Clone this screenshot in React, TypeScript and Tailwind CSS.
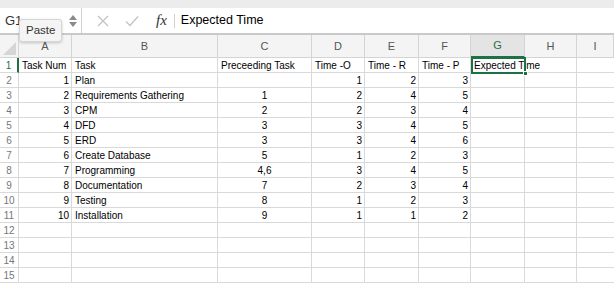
import React from 'react';

const COLS = ['A', 'B', 'C', 'D', 'E', 'F', 'G', 'H', 'I'];

type Row = [number | string, string, string, number | string, number | string, number | string];

const DATA: Row[] = [
  [1, 'Plan', '', 1, 2, 3],
  [2, 'Requirements Gathering', '1', 2, 4, 5],
  [3, 'CPM', '2', 2, 3, 4],
  [4, 'DFD', '3', 3, 4, 5],
  [5, 'ERD', '3', 3, 4, 6],
  [6, 'Create Database', '5', 1, 2, 3],
  [7, 'Programming', '4,6', 3, 4, 5],
  [8, 'Documentation', '7', 2, 3, 4],
  [9, 'Testing', '8', 1, 2, 3],
  [10, 'Installation', '9', 1, 1, 2],
];

const grid = 'grid grid-cols-[19px_53px_146px_94px_53px_54px_52px_54px_52px_37px]';

const FormulaBar = () => (
  <div className="relative flex h-[27px] items-center border-b-2 border-[#c9c9c9] bg-white">
    <div className="flex h-full w-[82px] items-center border-r border-[#d0d0d0] pl-[5px]">
      <span className="text-[13px] text-[#333]">G1</span>
      <div className="ml-auto mr-[4px] flex flex-col items-center gap-[2px]">
        <svg width="8" height="5" viewBox="0 0 8 5"><path d="M4 0L8 5H0z" fill="#8a8a8a" /></svg>
        <svg width="8" height="5" viewBox="0 0 8 5"><path d="M0 0H8L4 5z" fill="#8a8a8a" /></svg>
      </div>
    </div>
    <svg className="ml-[15px]" width="12" height="12" viewBox="0 0 12 12">
      <path d="M1 1L11 11M11 1L1 11" stroke="#c4c4c4" strokeWidth="1.4" />
    </svg>
    <svg className="ml-[16px]" width="14" height="12" viewBox="0 0 14 12">
      <path d="M1 6.5L5 10.5L13 1.5" stroke="#c4c4c4" strokeWidth="1.4" fill="none" />
    </svg>
    <span className="ml-[17px] text-[15px] italic text-[#333]" style={{ fontFamily: '"Liberation Serif", serif' }}>
      fx
    </span>
    <div className="ml-[7px] h-[14px] w-px bg-[#d0d0d0]" />
    <span className="ml-[6px] text-[12.5px] text-black">Expected Time</span>
    {/* tooltip */}
    <div className="absolute left-[19px] top-[11px] rounded-[3px] border border-[#d6d6d6] bg-[#f4f4f4] px-[6px] py-[2px] text-[11.5px] text-[#333] shadow-[0_1px_3px_rgba(0,0,0,0.2)]">
      Paste
    </div>
  </div>
);

const HeaderRow = () => (
  <div className={`${grid} h-[23px] bg-[#f4f4f4]`}>
    <div className="relative border-r border-b border-[#d4d4d4]">
      <svg className="absolute bottom-[2px] right-[2px]" width="13" height="13" viewBox="0 0 13 13">
        <path d="M13 0V13H0z" fill="#d6d6d6" />
      </svg>
    </div>
    {COLS.map((c) =>
      c === 'G' ? (
        <div key={c} className="flex items-center justify-center border-r border-b-2 border-r-[#d4d4d4] border-b-[#1e7145] bg-[#e4e4e4] text-[11px] text-[#1e7145]">
          {c}
        </div>
      ) : (
        <div key={c} className="flex items-center justify-center border-r border-b border-[#d4d4d4] text-[11px] text-[#555]">
          {c}
        </div>
      )
    )}
  </div>
);

const Cell = ({ children, align = 'left', last = false }: { children?: React.ReactNode; align?: 'left' | 'right' | 'center'; last?: boolean }) => (
  <div
    className={`flex h-[15px] items-center overflow-visible whitespace-nowrap border-b border-[#d9d9d9] text-[10px] text-black ${last ? '' : 'border-r'} ${
      align === 'right' ? 'justify-end pr-[2px]' : align === 'center' ? 'justify-center' : 'justify-start pl-[3px]'
    }`}
  >
    {children}
  </div>
);

const RowNum = ({ n }: { n: number }) =>
  n === 1 ? (
    <div className="flex h-[15px] items-center justify-center border-b border-r-2 border-b-[#d9d9d9] border-r-[#1e7145] text-[10px] text-[#1e7145]">
      {n}
    </div>
  ) : (
    <div className="flex h-[15px] items-center justify-center border-b border-r border-[#d9d9d9] text-[10px] text-[#777]">
      {n}
    </div>
  );

export default function App() {
  const rows = Array.from({ length: 15 }, (_, i) => i + 1);
  return (
    <div className="h-[285px] w-[614px] overflow-hidden bg-white" style={{ fontFamily: '"Liberation Sans", Arial, sans-serif' }}>
      <div className="h-[8px] bg-[#ececec]" />
      <FormulaBar />
      <HeaderRow />
      <div className="relative">
        {rows.map((n) => {
          let cells: React.ReactNode[];
          if (n === 1) {
            cells = [
              <Cell key="a">Task Num</Cell>,
              <Cell key="b">Task</Cell>,
              <Cell key="c">Preceeding Task</Cell>,
              <Cell key="d">Time -O</Cell>,
              <Cell key="e">Time - R</Cell>,
              <Cell key="f">Time - P</Cell>,
              <Cell key="g">Expected Time</Cell>,
              <Cell key="h" />,
              <Cell key="i" last />,
            ];
          } else {
            const d = DATA[n - 2];
            cells = d
              ? [
                  <Cell key="a" align="right">{d[0]}</Cell>,
                  <Cell key="b">{d[1]}</Cell>,
                  <Cell key="c" align="center">{d[2]}</Cell>,
                  <Cell key="d" align="right">{d[3]}</Cell>,
                  <Cell key="e" align="right">{d[4]}</Cell>,
                  <Cell key="f" align="right">{d[5]}</Cell>,
                  <Cell key="g" />,
                  <Cell key="h" />,
                  <Cell key="i" last />,
                ]
              : COLS.map((c, i) => <Cell key={c} last={i === COLS.length - 1} />);
          }
          return (
            <div key={n} className={grid}>
              <RowNum n={n} />
              {cells}
            </div>
          );
        })}
        {/* selected cell G1 */}
        <div className="pointer-events-none absolute left-[471px] top-[-1px] h-[17px] w-[55px] border-2 border-[#1e7145]">
          <div className="absolute bottom-[-4px] right-[-4px] h-[5px] w-[5px] border border-white bg-[#1e7145]" />
        </div>
      </div>
    </div>
  );
}
